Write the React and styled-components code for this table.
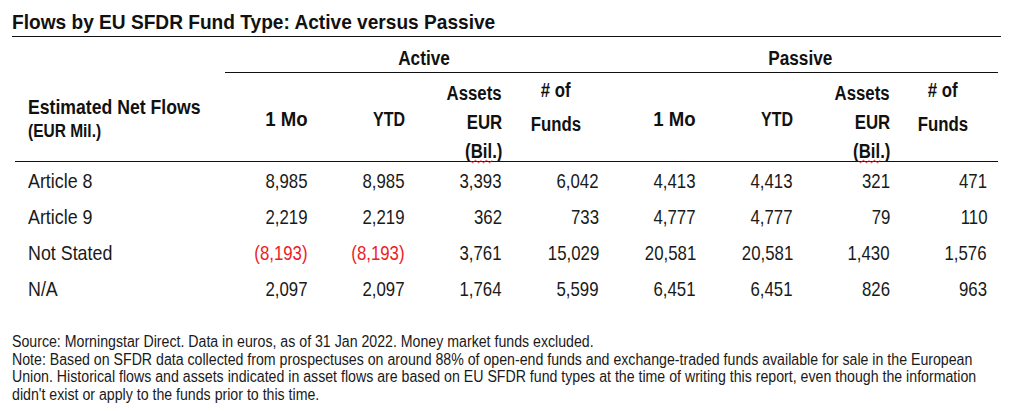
import React from 'react'
import styled, { createGlobalStyle } from 'styled-components'

// no condensed face is installed, so text is Liberation Sans squeezed horizontally
const GlobalStyle = createGlobalStyle`
    html, body {
        overflow: hidden;
    }
    body {
        margin: 0;
        background: #ffffff;
        font-family: "Liberation Sans", Arial, sans-serif;
        color: #1a1a1a;
    }
`

const Page = styled.div`
    width: 989px;
    padding: 0 8px 0 12px;
`

const Narrow = styled.span`
    display: inline-block;
    white-space: nowrap;
    transform: scaleX(${p => p.$scale || 0.85});
    transform-origin: ${p => p.$origin || 'left'} center;
`

const Title = styled.h1`
    margin: 0;
    height: 37px;
    padding-top: 9px;
    box-sizing: border-box;
    font-size: 21px;
    line-height: 26px;
    font-weight: 700;
    color: #111;
    border-bottom: 1px solid #111;
`

const Table = styled.div`
    display: grid;
    grid-template-columns: 213px repeat(8, 97px);
`

const GroupCell = styled.div`
    grid-column: ${p => p.$span};
    height: 36px;
    box-sizing: border-box;
    display: flex;
    align-items: flex-end;
    justify-content: center;
    padding: 0 ${p => p.$shift < 0 ? -p.$shift : 0}px 2px ${p => p.$shift > 0 ? p.$shift : 0}px;
    font-size: 20px;
    font-weight: 700;
    line-height: 24px;
    color: #111;
    border-bottom: 1px solid #111;
    margin-right: ${p => p.$last ? 3 : 0}px;
`

const Spacer = styled.div`
    grid-column: 1;
`

const HeadRow = styled.div`
    grid-column: 1 / -1;
    display: grid;
    grid-template-columns: subgrid;
    height: 89px;
    box-sizing: border-box;
    border-bottom: 1px solid #111;
    margin: 0 3px;
`

const HeadLabel = styled.div`
    display: flex;
    flex-direction: column;
    align-items: flex-start;
    padding: 22px 0 0 13px;
    font-weight: 700;
    color: #111;
`

const LabelLine = styled.div`
    font-size: ${p => p.$size}px;
    line-height: 24px;
`

const HeadCell = styled.div`
    display: flex;
    flex-direction: column;
    align-items: ${p => p.$center ? 'center' : 'flex-end'};
    padding-top: ${p => p.$top}px;
    padding-right: ${p => p.$pad}px;
    font-weight: 700;
    font-size: 20px;
    line-height: ${p => p.$lh}px;
    color: #111;
`

const Wavy = styled.span`
    text-decoration: underline wavy #e8252b;
    text-decoration-thickness: 1.2px;
    text-underline-offset: 1px;
`

const Row = styled.div`
    grid-column: 1 / -1;
    display: grid;
    grid-template-columns: subgrid;
    height: 36px;
    align-items: center;
    padding-top: 2px;
    box-sizing: border-box;
    font-size: 21px;
    line-height: 24px;
`

const Label = styled.div`
    padding-left: 16px;
    color: #1a1a1a;
`

const Num = styled.div`
    text-align: right;
    padding-right: 14px;
    color: ${p => p.$neg ? '#ee1c25' : '#1a1a1a'};
`

const Notes = styled.div`
    display: flex;
    flex-direction: column;
    align-items: flex-start;
    margin-top: 27px;
    font-size: 16px;
    line-height: 17.6px;
    color: #1a1a1a;
`

const rows = [
    { label: 'Article 8', values: ['8,985', '8,985', '3,393', '6,042', '4,413', '4,413', '321', '471'] },
    { label: 'Article 9', values: ['2,219', '2,219', '362', '733', '4,777', '4,777', '79', '110'] },
    { label: 'Not Stated', values: ['(8,193)', '(8,193)', '3,761', '15,029', '20,581', '20,581', '1,430', '1,576'] },
    { label: 'N/A', values: ['2,097', '2,097', '1,764', '5,599', '6,451', '6,451', '826', '963'] },
]

const notes = [
    'Source: Morningstar Direct. Data in euros, as of 31 Jan 2022. Money market funds excluded.',
    'Note: Based on SFDR data collected from prospectuses on around 88% of open-end funds and exchange-traded funds available for sale in the European',
    'Union. Historical flows and assets indicated in asset flows are based on EU SFDR fund types at the time of writing this report, even though the information',
    "didn't exist or apply to the funds prior to this time.",
]

const HeadLines = ({ lines, origin = 'right', scale = 0.84 }) =>
    lines.map((l, i) => <Narrow key={i} $scale={scale} $origin={origin}>{l}</Narrow>)

const groupHeads = (prefix) => [
    <HeadCell key={prefix + 'mo'} $top={34} $pad={14} $lh={24}>
        <HeadLines lines={['1 Mo']} scale={0.93} />
    </HeadCell>,
    <HeadCell key={prefix + 'ytd'} $top={34} $pad={14} $lh={24}>
        <HeadLines lines={['YTD']} scale={0.8} />
    </HeadCell>,
    <HeadCell key={prefix + 'assets'} $top={6} $pad={14} $lh={29}>
        <HeadLines lines={['Assets', 'EUR', <>(<Wavy>Bil</Wavy>.)</>]} />
    </HeadCell>,
    <HeadCell key={prefix + 'funds'} $center $top={0} $pad={17} $lh={34}>
        <HeadLines lines={['# of', 'Funds']} origin='center' />
    </HeadCell>,
]

export default function App() {
    return (
        <Page>
            <GlobalStyle />
            <Title><Narrow $scale={0.91}>Flows by EU SFDR Fund Type: Active versus Passive</Narrow></Title>
            <Table>
                <Spacer />
                <GroupCell $span='2 / 6' $shift={10}><Narrow $scale={0.86} $origin='center'>Active</Narrow></GroupCell>
                <GroupCell $span='6 / 10' $shift={-10} $last><Narrow $scale={0.86} $origin='center'>Passive</Narrow></GroupCell>
                <HeadRow>
                    <HeadLabel>
                        <LabelLine $size={21}><Narrow $scale={0.84}>Estimated Net Flows</Narrow></LabelLine>
                        <LabelLine $size={18}><Narrow $scale={0.86}>(EUR Mil.)</Narrow></LabelLine>
                    </HeadLabel>
                    {groupHeads('a')}
                    {groupHeads('p')}
                </HeadRow>
                {rows.map(r =>
                    <Row key={r.label}>
                        <Label><Narrow>{r.label}</Narrow></Label>
                        {r.values.map((v, i) =>
                            <Num key={i} $neg={v.startsWith('(')}>
                                <Narrow $scale={0.8} $origin='right'>{v}</Narrow>
                            </Num>
                        )}
                    </Row>
                )}
            </Table>
            <Notes>
                {notes.map((n, i) => <Narrow key={i} $scale={0.885}>{n}</Narrow>)}
            </Notes>
        </Page>
    )
}
